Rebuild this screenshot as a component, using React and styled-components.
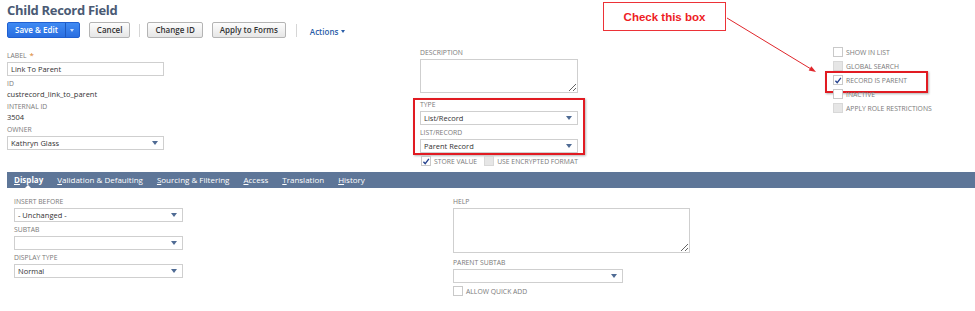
import React from 'react';
import styled, { createGlobalStyle } from 'styled-components';

const GlobalStyle = createGlobalStyle`
  html, body { margin: 0; padding: 0; background: #fff; }
  body { font-family: "Open Sans", "Noto Sans", Arial, sans-serif; color: #333; }
  * { box-sizing: border-box; }
`;

const Page = styled.div`
  position: relative;
  width: 975px;
  height: 311px;
  overflow: hidden;
`;

const Header = styled.header`
  padding-left: 7px;
`;

const Title = styled.h1`
  margin: 1px 0 0;
  font-size: 13px;
  line-height: 18px;
  font-weight: 700;
  color: #4a5a74;
  letter-spacing: -0.3px;
`;

const Toolbar = styled.div`
  display: flex;
  align-items: center;
  height: 16px;
  margin-top: 3px;
`;

const SplitButton = styled.div`
  display: flex;
  height: 16px;
  border: 1px solid #1f5fd0;
  border-radius: 2px;
  background: linear-gradient(#3f8af3, #2a6ee0);
`;

const SplitMain = styled.span`
  padding: 0 7px;
  color: #fff;
  font-size: 8px;
  font-weight: 600;
  line-height: 14px;
  white-space: nowrap;
`;

const SplitDrop = styled.span`
  width: 14px;
  display: flex;
  align-items: center;
  justify-content: center;
  border-left: 1px solid #1d58bf;
  &::before {
    content: '';
    border-left: 2.5px solid transparent;
    border-right: 2.5px solid transparent;
    border-top: 3.5px solid #c9dcfb;
  }
`;

const Button = styled.button`
  height: 16px;
  margin-left: ${p => p.$ml || 0}px;
  padding: 0 7px;
  border: 1px solid #b4b4b4;
  border-radius: 2px;
  background: linear-gradient(#fdfdfd, #e6e6e6);
  font-family: inherit;
  font-size: 8px;
  font-weight: 600;
  line-height: 14px;
  color: #333;
  white-space: nowrap;
`;

const Sep = styled.span`
  width: 1px;
  height: 13px;
  margin-left: ${p => p.$ml}px;
  background: #d6d6d6;
`;

const Actions = styled.span`
  display: flex;
  align-items: center;
  gap: 3px;
  margin-left: 13px;
  padding-top: 3px;
  color: #2a5da8;
  font-size: 8px;
  font-weight: 600;
  &::after {
    content: '';
    border-left: 2.5px solid transparent;
    border-right: 2.5px solid transparent;
    border-top: 3px solid #2a5da8;
  }
`;

const Section = styled.section`
  display: flex;
  align-items: flex-start;
  margin-top: ${p => p.$mt}px;
`;

const Column = styled.div`
  display: flex;
  flex-direction: column;
  gap: ${p => (p.$gap ?? 3)}px;
  width: ${p => p.$w}px;
  margin-left: ${p => p.$ml}px;
  margin-top: ${p => p.$mt || 0}px;
  flex-shrink: 0;
`;

const Field = styled.div`
  display: flex;
  flex-direction: column;
  margin-top: ${p => p.$mt || 0}px;
`;

const Label = styled.div`
  font-size: 6.8px;
  line-height: 10px;
  color: #7a7a7a;
  text-transform: uppercase;
  white-space: nowrap;
  margin-bottom: ${p => (p.$flat ? 0 : 1)}px;
`;

const Star = styled.span`
  color: #d9831f;
  margin-left: 3px;
  font-size: 8px;
`;

const Value = styled.div`
  font-size: 7.5px;
  line-height: 10px;
  color: #333;
`;

const Input = styled.div`
  height: 14px;
  width: ${p => (p.$w ? `${p.$w}px` : '100%')};
  display: flex;
  align-items: center;
  justify-content: space-between;
  padding: 0 0 0 3px;
  border: 1px solid #cfcfcf;
  background: #fff;
  font-size: 7.5px;
  color: #333;
  white-space: nowrap;
`;

const Arrow = styled.span`
  margin-right: 5px;
  border-left: 3.5px solid transparent;
  border-right: 3.5px solid transparent;
  border-top: 4px solid #4f6b94;
`;

const TextArea = styled.textarea`
  display: block;
  width: 100%;
  height: ${p => p.$h}px;
  margin: 0;
  border: 1px solid #cfcfcf;
  background: #fff;
  resize: both;
  font-family: inherit;
  font-size: 7.5px;
  outline: none;
`;

const TypeBox = styled.div`
  display: flex;
  flex-direction: column;
  gap: 3px;
  margin: 2px -7px 0 -7px;
  padding: 0 5px 0 5px;
  border: 2px solid #e11b22;
  box-shadow: 1px 1px 2px rgba(0, 0, 0, 0.28);
`;

const CheckRow = styled.div`
  position: relative;
  display: flex;
  align-items: center;
  gap: 3px;
  height: ${p => p.$h || 14}px;
  margin-top: ${p => p.$mt || 0}px;
  &::after {
    content: '';
    display: ${p => (p.$highlight ? 'block' : 'none')};
    position: absolute;
    left: -8px;
    top: -2px;
    width: 99px;
    height: 18px;
    border: 2px solid #e11b22;
    box-shadow: 1px 1px 2px rgba(0, 0, 0, 0.3);
  }
`;

const Box = styled.span`
  width: 10px;
  height: 10px;
  flex-shrink: 0;
  margin-left: ${p => p.$ml || 0}px;
  border: 1px solid ${p => (p.$disabled ? '#d8d8d8' : '#c9c9c9')};
  background: ${p => (p.$disabled ? '#e6e6e6' : '#fff')};
  display: flex;
  align-items: center;
  justify-content: center;
`;

const CheckLabel = styled.span`
  font-size: 6.8px;
  color: #7a7a7a;
  text-transform: uppercase;
  white-space: nowrap;
`;

const TabBar = styled.nav`
  display: flex;
  align-items: center;
  gap: 14px;
  height: 16px;
  margin: 6px 0 0 7px;
  padding-left: 7px;
  background: #5e7698;
`;

const Tab = styled.span`
  position: relative;
  color: #fff;
  font-size: 8px;
  line-height: 16px;
  font-weight: ${p => (p.$active ? 700 : 400)};
  white-space: nowrap;
  &::after {
    content: '';
    display: ${p => (p.$active ? 'block' : 'none')};
    position: absolute;
    left: 11px;
    bottom: 0;
    border-left: 3px solid transparent;
    border-right: 3px solid transparent;
    border-bottom: 3px solid #fff;
  }
`;

const Callout = styled.div`
  position: absolute;
  left: 603px;
  top: 2px;
  width: 123px;
  height: 29px;
  display: flex;
  align-items: center;
  justify-content: center;
  border: 1.5px solid #ec3237;
  background: #fff;
  font-family: "Liberation Sans", Arial, sans-serif;
  font-size: 11.5px;
  font-weight: 700;
  color: #ee1c25;
`;

const Overlay = styled.svg`
  position: absolute;
  left: 0;
  top: 0;
  pointer-events: none;
`;

const Check = () => (
  <svg width="9" height="9" viewBox="0 0 10 10">
    <path d="M1.8 5.4 L4 7.7 L8.6 1.8" fill="none" stroke="#23408e" strokeWidth="1.7" />
  </svg>
);

const CheckItem = ({ label, checked, disabled, highlight, ml, h, mt }) => (
  <CheckRow $highlight={highlight} $h={h} $mt={mt}>
    <Box $disabled={disabled} $ml={ml}>{checked && <Check />}</Box>
    <CheckLabel>{label}</CheckLabel>
  </CheckRow>
);

const SelectBox = ({ value, w }) => (
  <Input $w={w}>
    <span>{value}</span>
    <Arrow />
  </Input>
);

const tabs = ['Display', 'Validation & Defaulting', 'Sourcing & Filtering', 'Access', 'Translation', 'History'];

export default function App() {
  return (
    <Page>
      <GlobalStyle />
      <Header>
        <Title>Child Record Field</Title>
        <Toolbar>
          <SplitButton>
            <SplitMain>Save &amp; Edit</SplitMain>
            <SplitDrop />
          </SplitButton>
          <Button $ml={9}>Cancel</Button>
          <Sep $ml={9} />
          <Button $ml={7}>Change ID</Button>
          <Button $ml={9}>Apply to Forms</Button>
          <Sep $ml={10} />
          <Actions>Actions</Actions>
        </Toolbar>
      </Header>

      <Section $mt={7}>
        <Column $w={157} $ml={7} $mt={5}>
          <Field>
            <Label>Label<Star>*</Star></Label>
            <Input>Link To Parent</Input>
          </Field>
          <Field>
            <Label $flat>ID</Label>
            <Value>custrecord_link_to_parent</Value>
          </Field>
          <Field>
            <Label $flat>Internal ID</Label>
            <Value>3504</Value>
          </Field>
          <Field>
            <Label>Owner</Label>
            <SelectBox value="Kathryn Glass" />
          </Field>
        </Column>

        <Column $w={158} $ml={256} $mt={3}>
          <Field>
            <Label>Description</Label>
            <TextArea $h={34} readOnly />
          </Field>
          <TypeBox>
            <Field>
              <Label>Type</Label>
              <SelectBox value="List/Record" />
            </Field>
            <Field>
              <Label>List/Record</Label>
              <SelectBox value="Parent Record" />
            </Field>
          </TypeBox>
          <CheckRow $h={10} $mt={-2}>
            <Box $ml={1}><Check /></Box>
            <CheckLabel>Store Value</CheckLabel>
            <Box $disabled $ml={4} />
            <CheckLabel>Use Encrypted Format</CheckLabel>
          </CheckRow>
        </Column>

        <Column $w={120} $ml={255} $gap={0}>
          <CheckItem label="Show in List" />
          <CheckItem label="Global Search" disabled />
          <CheckItem label="Record is Parent" checked highlight />
          <CheckItem label="Inactive" />
          <CheckItem label="Apply Role Restrictions" disabled />
        </Column>
      </Section>

      <TabBar>
        {tabs.map((t, i) => (
          <Tab key={t} $active={i === 0}>
            <u>{t[0]}</u>{t.slice(1)}
          </Tab>
        ))}
      </TabBar>

      <Section $mt={9}>
        <Column $w={169} $ml={14}>
          <Field>
            <Label>Insert Before</Label>
            <SelectBox value="- Unchanged -" />
          </Field>
          <Field>
            <Label>Subtab</Label>
            <SelectBox value="" />
          </Field>
          <Field>
            <Label>Display Type</Label>
            <SelectBox value="Normal" />
          </Field>
        </Column>

        <Column $w={237} $ml={270}>
          <Field>
            <Label>Help</Label>
            <TextArea $h={45} readOnly />
          </Field>
          <Field $mt={2}>
            <Label>Parent Subtab</Label>
            <SelectBox value="" w={170} />
          </Field>
          <CheckItem label="Allow Quick Add" h={12} mt={-1} />
        </Column>
      </Section>

      <Callout>Check this box</Callout>
      <Overlay width="975" height="311" viewBox="0 0 975 311">
        <line x1="727" y1="18" x2="810" y2="68.4" stroke="#e0262b" strokeWidth="1" />
        <polygon points="816,72 808.7,70.5 811.3,66.2" fill="#e0262b" />
      </Overlay>
    </Page>
  );
}
